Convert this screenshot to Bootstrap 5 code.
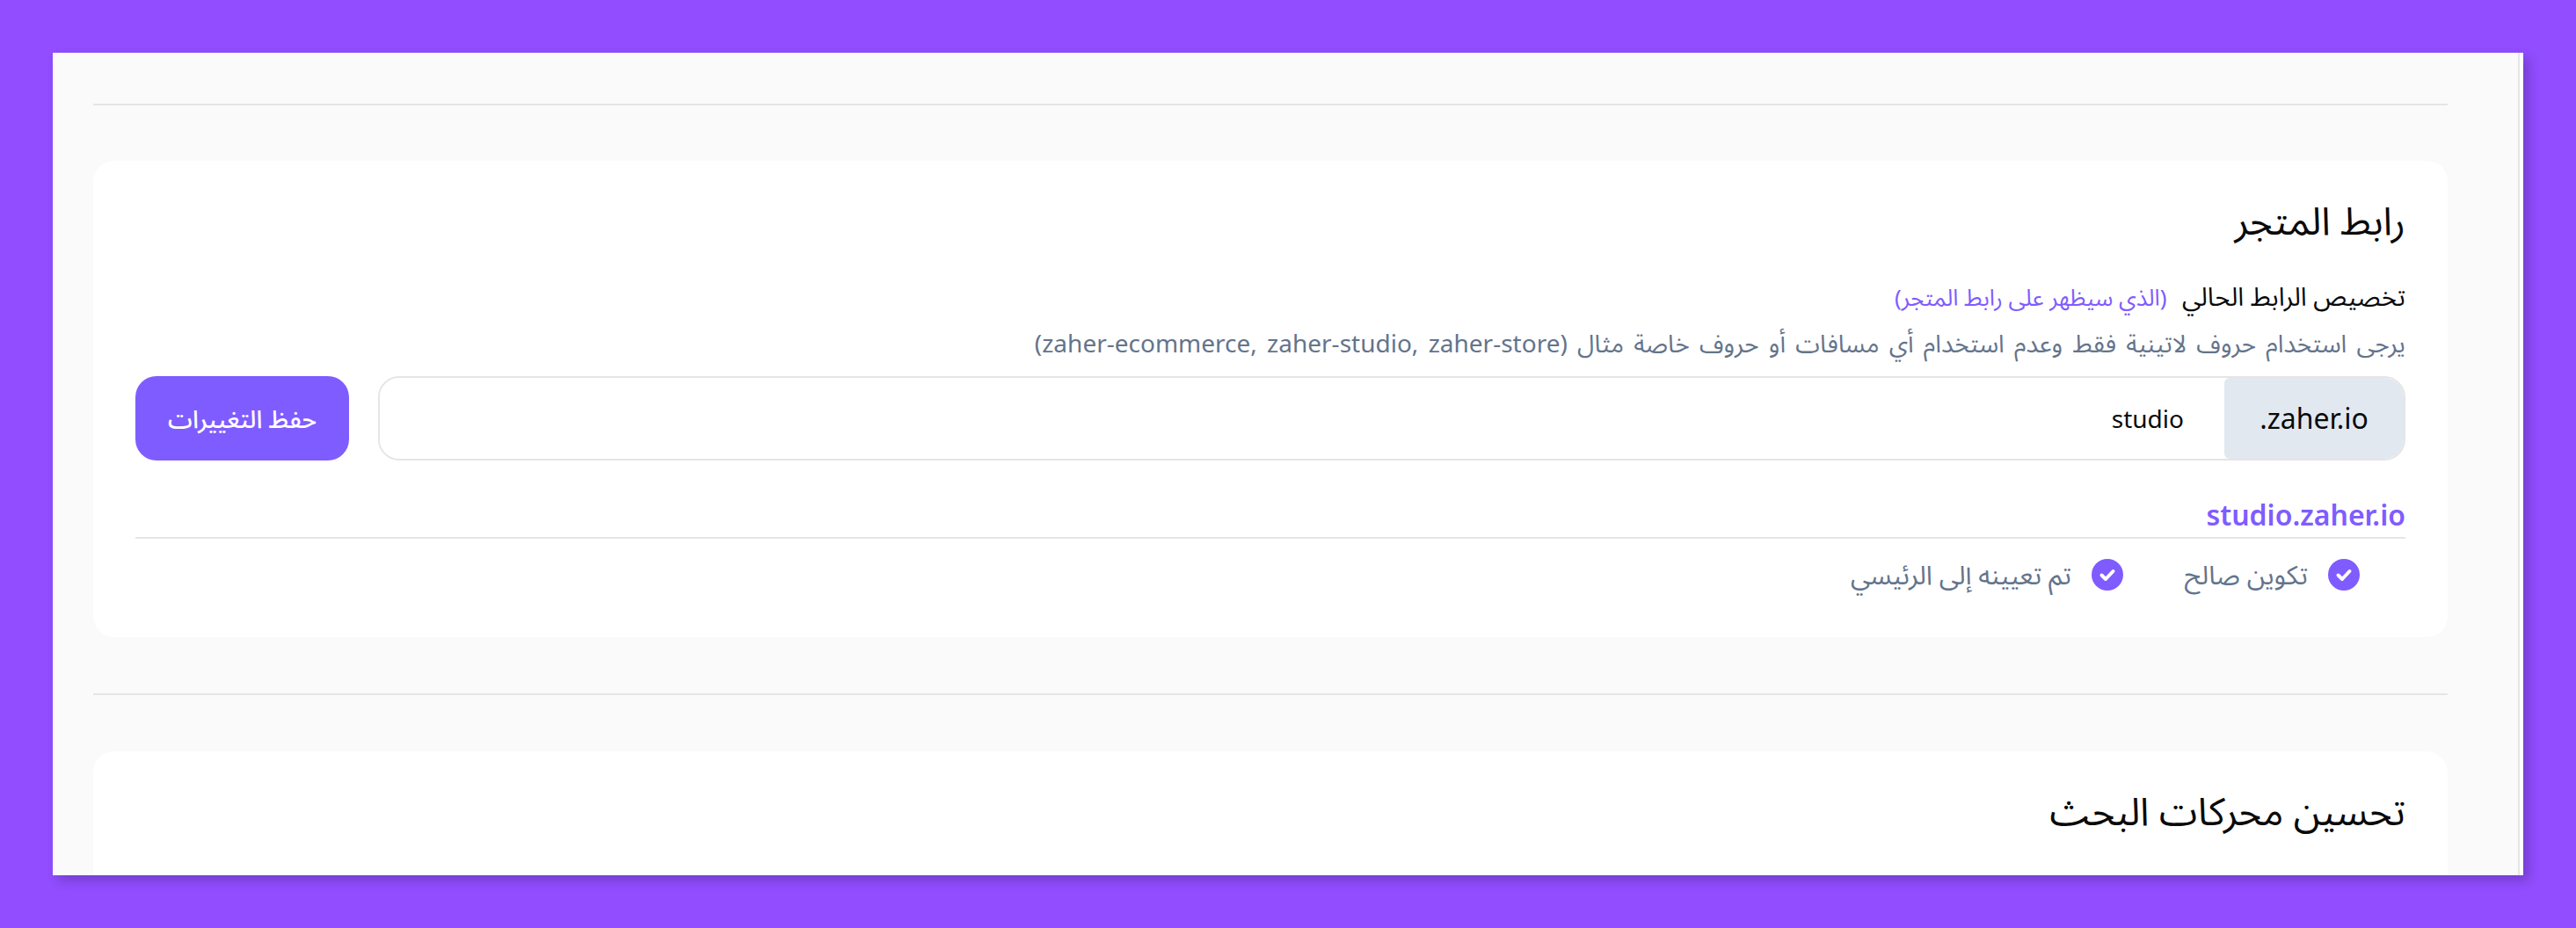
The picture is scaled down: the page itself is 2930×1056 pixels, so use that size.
<!DOCTYPE html>
<html lang="ar" dir="rtl">
<head>
    <meta charset="UTF-8">
    <meta name="viewport" content="width=device-width, initial-scale=1.0">
    <title>رابط المتجر</title>
    <link href="https://cdn.jsdelivr.net/npm/bootstrap@5.3.0/dist/css/bootstrap.min.css" rel="stylesheet">
    <style>
        body {
            background: #914dff;
            font-family: "Noto Sans", "Noto Sans Arabic", "DejaVu Sans", sans-serif;
            padding: 60px;
            height: 1056px;
            overflow: hidden;
        }
        .app-frame {
            height: 936px;
            background: #fff;
            box-shadow: 6px 6px 12px rgba(0, 0, 0, .2);
            overflow: hidden;
            padding-right: 4px;
        }
        .app-page {
            height: 100%;
            background: #fafafa;
            border-right: 2px solid #e5e5e5;
            padding: 58px 80px 0 46px;
        }
        .rule {
            height: 2px;
            background: #e5e5e5;
        }
        .panel {
            background: #fff;
            border-radius: 24px;
            padding: 40px 48px 42px 48px;
        }
        .first-panel { margin-top: 63px; height: 542px; }
        .last-panel { height: 300px; }
        .mid-rule { margin: 64px 0; }
        .panel-title {
            font-size: 44px;
            line-height: 54px;
            font-weight: 400;
            color: #0a0a0a;
            margin: 0;
        }
        .field-label {
            font-size: 29px;
            line-height: 40px;
            color: #0a0a0a;
            margin: 40px 0 0;
        }
        .field-label span {
            color: #7f5cff;
            font-size: 26px;
            margin-right: 10px;
        }
        .field-hint {
            font-size: 28px;
            line-height: 40px;
            word-spacing: 4px;
            color: #64748b;
            margin: 12px 0 18px;
        }
        .url-group {
            height: 96px;
            border: 2px solid #e5e5e5;
            border-radius: 24px;
            overflow: hidden;
        }
        .url-group .form-control {
            border: 0;
            font-size: 28px;
            padding: 0 46px;
            color: #0a0a0a;
            margin: 0;
        }
        .url-group .input-group-text {
            background: #e2e8f0;
            border: 0;
            font-size: 32px;
            color: #0a0a0a;
            width: 204px;
            justify-content: center;
        }
        .form-row { gap: 33px; }
        .btn-save {
            width: 243px;
            height: 96px;
            background: #7f5cff;
            border: 0;
            border-radius: 24px;
            color: #fff;
            font-size: 28px;
            font-weight: 500;
        }
        .domain-name {
            color: #7f5cff;
            font-size: 32px;
            font-weight: 600;
            line-height: 40px;
            margin-top: 42px;
        }
        .domain-rule { margin-top: 5px; }
        .status-row {
            margin-top: 23px;
            padding-right: 52px;
            gap: 70px;
            color: #64748b;
            font-size: 30px;
            line-height: 36px;
        }
        .status-item { gap: 23px; }
        .status-row svg { width: 36px; height: 36px; }
    </style>
</head>
<body>
    <div class="app-frame">
        <main class="app-page">
            <div class="rule"></div>

            <section class="panel first-panel">
                <h2 class="panel-title">رابط المتجر</h2>
                <p class="field-label">تخصيص الرابط الحالي <span>(الذي سيظهر على رابط المتجر)</span></p>
                <p class="field-hint">يرجى استخدام حروف لاتينية فقط وعدم استخدام أي مسافات أو حروف خاصة مثال (zaher-ecommerce, zaher-studio, zaher-store)</p>
                <div class="d-flex form-row">
                    <div class="input-group url-group flex-grow-1">
                        <span class="input-group-text" dir="ltr">.zaher.io</span>
                        <input type="text" class="form-control" value="studio">
                    </div>
                    <button type="button" class="btn btn-save flex-shrink-0">حفظ التغييرات</button>
                </div>
                <div class="domain-name">studio.zaher.io</div>
                <div class="rule domain-rule"></div>
                <div class="d-flex status-row">
                    <div class="d-flex align-items-center status-item">
                        <svg viewBox="0 0 36 36"><circle cx="18" cy="18" r="18" fill="#7f5cff"/><path d="M11.5 18.5l4.5 4.5 8.5-9" fill="none" stroke="#fff" stroke-width="4" stroke-linecap="round" stroke-linejoin="round"/></svg>
                        <span>تكوين صالح</span>
                    </div>
                    <div class="d-flex align-items-center status-item">
                        <svg viewBox="0 0 36 36"><circle cx="18" cy="18" r="18" fill="#7f5cff"/><path d="M11.5 18.5l4.5 4.5 8.5-9" fill="none" stroke="#fff" stroke-width="4" stroke-linecap="round" stroke-linejoin="round"/></svg>
                        <span>تم تعيينه إلى الرئيسي</span>
                    </div>
                </div>
            </section>

            <div class="rule mid-rule"></div>

            <section class="panel last-panel">
                <h2 class="panel-title">تحسين محركات البحث</h2>
            </section>
        </main>
    </div>
    <script src="https://cdn.jsdelivr.net/npm/bootstrap@5.3.0/dist/js/bootstrap.bundle.min.js"></script>
</body>
</html>
